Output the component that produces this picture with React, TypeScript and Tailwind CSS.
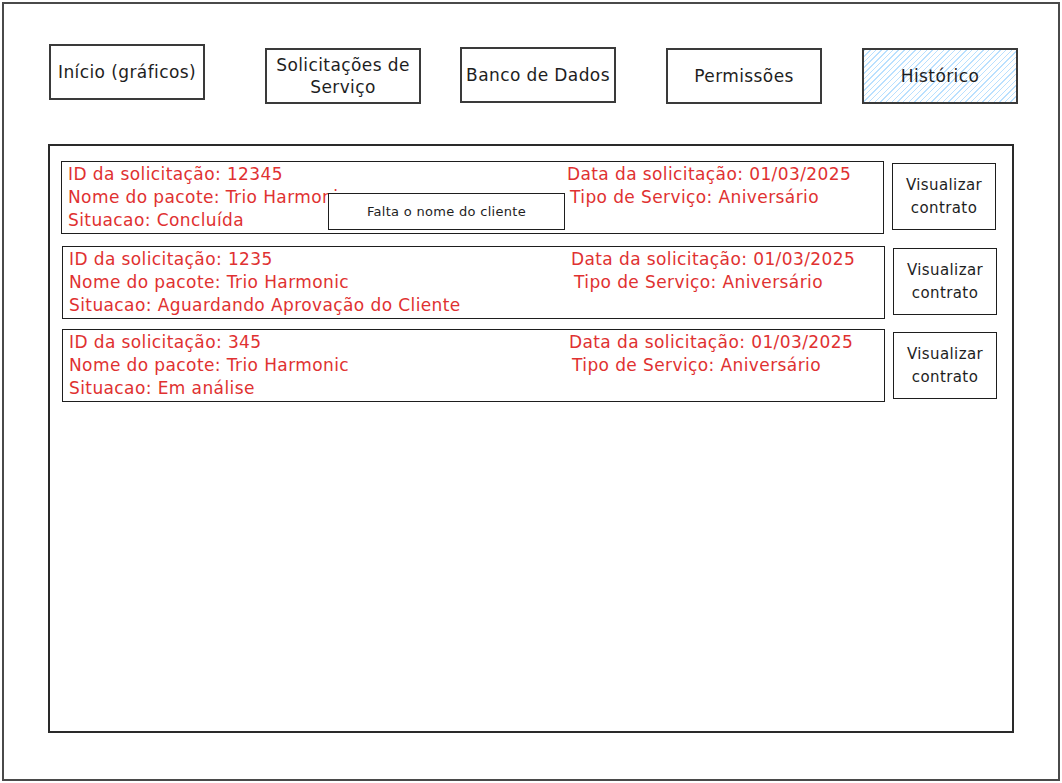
const font = { fontFamily: '"DejaVu Sans", "Liberation Sans", sans-serif' };

type Pedido = {
    id: string;
    situacao: string;
    leftW: string;
    mt: string;
    btnMt: string;
};

const pedidos: Pedido[] = [
    { id: "12345", situacao: "Concluída", leftW: "w-[505px]", mt: "mt-0", btnMt: "mt-[2px]" },
    { id: "1235", situacao: "Aguardando Aprovação do Cliente", leftW: "w-[508px]", mt: "mt-[12px]", btnMt: "mt-[2px]" },
    { id: "345", situacao: "Em análise", leftW: "w-[506px]", mt: "mt-[10px]", btnMt: "mt-[3px]" },
];

function NavBox({ children, className }: { children: React.ReactNode; className: string }) {
    return (
        <div
            className={`w-[156px] h-[56px] border-2 border-[#3a3a3a] flex items-center justify-center text-center text-[17px] tracking-[0.4px] leading-[22px] text-[#1e1e1e] ${className}`}
        >
            {children}
        </div>
    );
}

export default function App() {
    return (
        <div className="w-[1062px] h-[783px] bg-white p-[2px]" style={font}>
            <div className="w-[1058px] h-[779px] border-2 border-[#4a4a4a]">

                {/* Menu */}
                <div className="flex items-start pt-[40px] pl-[45px]">
                    <NavBox className="mt-0">Início (gráficos)</NavBox>
                    <NavBox className="mt-[4px] ml-[60px]">
                        Solicitações de
                        <br />
                        Serviço
                    </NavBox>
                    <NavBox className="mt-[3px] ml-[39px]">Banco de Dados</NavBox>
                    <NavBox className="mt-[4px] ml-[50px]">Permissões</NavBox>
                    <NavBox className="mt-[4px] ml-[40px] bg-[repeating-linear-gradient(135deg,#b9e0ff_0px,#b9e0ff_1px,transparent_1px,transparent_4px)]">
                        Histórico
                    </NavBox>
                </div>

                {/* Histórico */}
                <div className="ml-[44px] mt-[40px] w-[966px] h-[589px] border-2 border-[#2a2a2a] pt-[15px] pl-[11px]">
                    {pedidos.map((p, i) => (
                        <div key={p.id} className={`flex items-start ${p.mt} ${i > 0 ? "ml-[1px]" : ""}`}>
                            <div className="relative w-[823px] h-[73px] border-[1.5px] border-[#1e1e1e] text-[#e03131] text-[17px] tracking-[0.4px] leading-[23px] pt-[1px] flex">
                                <div className={`${p.leftW} shrink-0 pl-[6px]`}>
                                    <div>ID da solicitação: {p.id}</div>
                                    <div>Nome do pacote: Trio Harmonic</div>
                                    <div>Situacao: {p.situacao}</div>
                                </div>
                                <div>
                                    <div>Data da solicitação: 01/03/2025</div>
                                    <div className="pl-[3px]">Tipo de Serviço: Aniversário</div>
                                </div>

                                {i === 0 && (
                                    <div className="absolute left-[266px] top-[31px] w-[237px] h-[37px] bg-white border-[1.5px] border-[#1e1e1e] flex items-center justify-center text-[13px] tracking-[0.3px] text-[#1e1e1e]">
                                        Falta o nome do cliente
                                    </div>
                                )}
                            </div>
                            <div
                                className={`ml-[8px] ${p.btnMt} w-[104px] h-[67px] border-[1.5px] border-[#1e1e1e] flex items-center justify-center text-center text-[15px] tracking-[0.4px] leading-[23px] text-[#1e1e1e]`}
                            >
                                Visualizar
                                <br />
                                contrato
                            </div>
                        </div>
                    ))}
                </div>

            </div>
        </div>
    );
}
